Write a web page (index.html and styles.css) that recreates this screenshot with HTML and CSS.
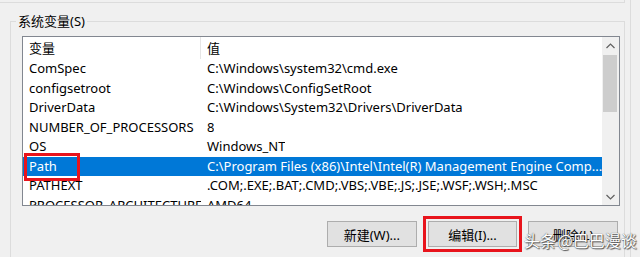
FILE: index.html
```html
<!DOCTYPE html>
<html>
<head>
	<meta charset="utf-8" />
	<title>系统变量</title>
	<link rel="stylesheet" href="styles.css">
</head>
<body>
	<div class="frame">
		<div class="prev-group"></div>
		<fieldset class="group">
			<legend>系统变量(S)</legend>
			<div class="listbox">
				<div class="list">
					<div class="row head">
						<div class="cell name">变量</div>
						<div class="cell value">值</div>
					</div>
					<div class="row"><div class="cell name">ComSpec</div><div class="cell value">C:\Windows\system32\cmd.exe</div></div>
					<div class="row"><div class="cell name">configsetroot</div><div class="cell value">C:\Windows\ConfigSetRoot</div></div>
					<div class="row"><div class="cell name">DriverData</div><div class="cell value">C:\Windows\System32\Drivers\DriverData</div></div>
					<div class="row"><div class="cell name">NUMBER_OF_PROCESSORS</div><div class="cell value">8</div></div>
					<div class="row"><div class="cell name">OS</div><div class="cell value">Windows_NT</div></div>
					<div class="row selected"><div class="cell name">Path</div><div class="cell value">C:\Program Files (x86)\Intel\Intel(R) Management Engine Comp...</div></div>
					<div class="row"><div class="cell name">PATHEXT</div><div class="cell value">.COM;.EXE;.BAT;.CMD;.VBS;.VBE;.JS;.JSE;.WSF;.WSH;.MSC</div></div>
					<div class="row"><div class="cell name">PROCESSOR_ARCHITECTURE</div><div class="cell value">AMD64</div></div>
					<span class="mark path-mark"></span>
				</div>
				<div class="scrollbar">
					<div class="arrow">
						<svg width="9" height="6" viewBox="0 0 9 6"><path d="M0.5 5 L4.5 1 L8.5 5" fill="none" stroke="#606060" stroke-width="1.2"/></svg>
					</div>
					<div class="thumb"></div>
					<div class="track"></div>
					<div class="arrow">
						<svg width="9" height="6" viewBox="0 0 9 6"><path d="M0.5 1 L4.5 5 L8.5 1" fill="none" stroke="#606060" stroke-width="1.2"/></svg>
					</div>
				</div>
			</div>
			<div class="buttons">
				<button class="btn">新建(W)...</button>
				<button class="btn marked">编辑(I)...</button>
				<button class="btn">删除(L)</button>
			</div>
		</fieldset>
	</div>
	<div class="watermark">头条 @巴巴漫谈</div>
</body>
</html>
```

FILE: styles.css
```css
* {
	box-sizing: border-box;
}

body {
	margin: 0;
	background-color: #f0f0f0;
	font-family: "Noto Sans", "Noto Sans CJK SC", sans-serif;
	font-size: 13px;
	color: #000000;
	overflow: hidden;
}

.frame {
	width: 631px;
	height: 257px;
	overflow: hidden;
	border-right: 1px solid #dcdcdc;
}

.prev-group {
	height: 3px;
	margin-right: 5px;
	border-bottom: 1px solid #dcdcdc;
	border-right: 1px solid #dcdcdc;
}

.group {
	margin: 9px 5px 0 10px;
	padding: 6px 6px 0 11px;
	border: 1px solid #dcdcdc;
	border-bottom: none;
	min-width: 0;
	height: 245px;
}

.group legend {
	margin-left: -6px;
	padding: 0 2px;
	line-height: 18px;
	color: #000000;
}

.listbox {
	display: flex;
	width: 598px;
	height: 170px;
	border: 1px solid #828790;
	background-color: #ffffff;
}

.list {
	position: relative;
	flex: 1;
	overflow: hidden;
}

.row {
	display: flex;
	height: 19.5px;
	line-height: 19.5px;
	white-space: nowrap;
}

.row.head {
	height: 22px;
	line-height: 22px;
}

.cell {
	padding-left: 6px;
	overflow: hidden;
}

.cell.name {
	width: 178px;
	flex: none;
}

.head .cell.name {
	border-right: 1px solid #e5e5e5;
}

.row.selected {
	background-color: #0078d7;
	color: #ffffff;
}

.mark {
	position: absolute;
	border: 3px solid #e8141c;
}

.path-mark {
	left: 1px;
	top: 116px;
	width: 56px;
	height: 28px;
}

.scrollbar {
	display: flex;
	flex-direction: column;
	width: 17px;
	background-color: #f0f0f0;
}

.arrow {
	height: 17px;
	display: flex;
	align-items: center;
	justify-content: center;
}

.thumb {
	height: 57px;
	margin: 1px 2px 0 1px;
	background-color: #cdcdcd;
}

.track {
	flex: 1;
}

.buttons {
	display: flex;
	gap: 11px;
	margin: 15px 0 0 305px;
}

.btn {
	width: 90px;
	height: 26px;
	padding: 0;
	font-family: "Noto Sans", "Noto Sans CJK SC", sans-serif;
	font-size: 13px;
	color: #000000;
	background-color: #e1e1e1;
	border: 1px solid #adadad;
}

.btn.marked {
	outline: 3px solid #e8141c;
	outline-offset: 2px;
}

.watermark {
	position: absolute;
	left: 524px;
	top: 228px;
	font-family: "Noto Sans CJK SC", sans-serif;
	font-size: 16px;
	color: #ffffff;
	white-space: nowrap;
	word-spacing: -2px;
	text-shadow: 0 0 1px #333333, 1px 1px 1px #555555;
}
```
